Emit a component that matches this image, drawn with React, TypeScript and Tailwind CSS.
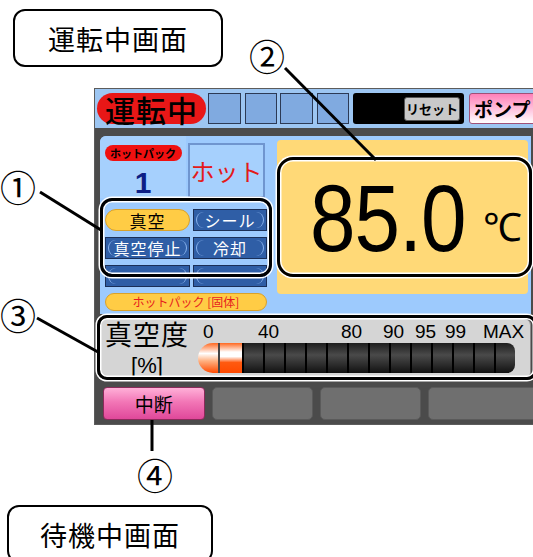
import React from "react";

const jp = "font-['Noto_Sans_CJK_JP',sans-serif]";

function BlueKey({ label }: { label?: string }) {
  return (
    <div className="relative flex items-center justify-center bg-[#2f5ea6] border border-[#1b2f57] text-white text-[16px] leading-none">
      <div className="absolute inset-[2px] rounded-[8px] border-x-[1.5px] border-[#8ab4ee]" />
      {label && <span className="relative tracking-[1px]">{label}</span>}
    </div>
  );
}

function Callout({ className }: { className: string }) {
  return (
    <div
      className={`absolute border-[3px] border-black shadow-[0_0_0_1.5px_#fff,inset_0_0_0_1.5px_#fff] ${className}`}
    />
  );
}

export default function App() {
  const ticks = [
    { t: "0", x: 10 },
    { t: "40", x: 65 },
    { t: "80", x: 148 },
    { t: "90", x: 190 },
    { t: "95", x: 222 },
    { t: "99", x: 252 },
    { t: "MAX", x: 290 },
  ];

  return (
    <div className={`relative w-[533px] h-[557px] bg-white overflow-hidden ${jp} text-black`}>
      {/* 運転中画面 label */}
      <div className="ml-[13px] mt-[9px] w-[210px] h-[58px] border-2 border-black rounded-[12px] flex items-center justify-center text-[27px] leading-none tracking-[1px]">
        運転中画面
      </div>

      {/* device screen */}
      <div className="ml-[94px] mt-[21px] w-[445px] h-[337px] bg-[#4b4b4b] border border-[#5c5c5c] flex flex-col">
        {/* status bar */}
        <div className="h-[39px] bg-[#9dc6f2] flex items-center pl-[2px] shrink-0">
          <div className="w-[111px] h-[31px] rounded-full bg-[#e81717] flex items-center justify-center text-[30px] leading-none font-medium tracking-[1px]">
            運転中
          </div>
          <div className="ml-[2px] w-[33px] h-[31px] bg-[#80aae0] border border-[#2c3a55]" />
          <div className="ml-[4px] w-[33px] h-[31px] bg-[#80aae0] border border-[#2c3a55]" />
          <div className="ml-[3px] w-[33px] h-[31px] bg-[#80aae0] border border-[#2c3a55]" />
          <div className="ml-[4px] w-[33px] h-[31px] bg-[#80aae0] border border-[#2c3a55]" />
          <div className="ml-[4px] w-[113px] h-[31px] bg-black rounded-[3px] flex items-center justify-end pr-[4px]">
            <div className="w-[56px] h-[24px] bg-[#c9c9c9] border border-[#555] rounded-[3px] flex items-center justify-center text-[13px] font-bold leading-none">
              リセット
            </div>
          </div>
          <div className="ml-[5px] w-[70px] h-[31px] rounded-[3px] border border-[#a05078] bg-[linear-gradient(to_bottom,#ff80b8,#ffd8ea_70%,#fff)] flex items-center pl-[4px] text-[19px] font-bold leading-none">
            ポンプ
          </div>
        </div>

        {/* body */}
        <div className="flex flex-col pl-[5px] pt-[8px]">
          <div className="w-[431px] h-[178px] bg-[#9dcafd] rounded-tl-[6px] flex">
            {/* left column */}
            <div className="w-[172px] flex flex-col">
              <div className="flex h-[62px]">
                <div className="w-[86px] flex flex-col items-center pt-[9px] bg-[#a6d0fd] rounded-tl-[6px]">
                  <div className="w-[77px] h-[18px] rounded-[8px] bg-[#f01010] flex items-center justify-center text-[11px] font-bold leading-none">
                    ホットパック
                  </div>
                  <div className="mt-[7px] text-[30px] font-bold leading-none text-[#0c1e85] font-['Liberation_Sans',sans-serif]">
                    1
                  </div>
                </div>
                <div className="ml-[2px] mt-[7px] w-[77px] h-[55px] border-2 border-[#6f95cf] bg-[#a6d0fd] flex items-center justify-center text-[24px] text-[#e31a1a] leading-none">
                  ホット
                </div>
              </div>
              <div className="mt-[11px] ml-[5px] grid grid-cols-[85px_74px] gap-x-[3px] gap-y-[6px] auto-rows-[22px]">
                <div className="rounded-full bg-[#ffcc45] border border-[#d9a12a] flex items-center justify-center text-[17px] leading-none tracking-[1px]">
                  真空
                </div>
                <BlueKey label="シール" />
                <BlueKey label="真空停止" />
                <BlueKey label="冷却" />
                <BlueKey />
                <BlueKey />
              </div>
              <div className="mt-[6px] ml-[5px] w-[162px] h-[18px] rounded-full bg-[#ffcc45] border border-[#d9a12a] flex items-center justify-center text-[12px] text-[#e61e1e] leading-none">
                ホットパック [固体]
              </div>
            </div>

            {/* temperature */}
            <div className="ml-[5px] mt-[4px] w-[251px] h-[154px] bg-[#ffd977] rounded-[4px] flex items-center pl-[33px] pt-[4px]">
              <span className="inline-block origin-left scale-x-[0.87] text-[94px] leading-none tracking-[-1px] font-['Liberation_Sans',sans-serif]">
                85.0
              </span>
              <span className="-ml-[6px] mt-[16px] text-[39px] leading-none font-['Liberation_Sans',sans-serif]">
                ℃
              </span>
            </div>
          </div>

          {/* vacuum gauge */}
          <div className="mt-[4px] w-[431px] h-[62px] bg-[#d5d5d5] rounded-[7px] border border-[#8a8a8a] flex">
            <div className="w-[92px] flex flex-col items-center pt-[2px]">
              <div className="h-[26px] text-[27px] leading-[26px] tracking-[1px]">真空度</div>
              <div className="mt-[9px] h-[20px] text-[22px] leading-[20px] font-['Liberation_Sans',sans-serif]">[%]</div>
            </div>
            <div className="flex flex-col pt-[3px]">
              <div className="relative h-[21px] w-[330px] text-[19px] leading-none font-['Liberation_Sans',sans-serif]">
                {ticks.map((k) => (
                  <span key={k.t} className="absolute top-0" style={{ left: k.x }}>
                    {k.t}
                  </span>
                ))}
              </div>
              <div className="ml-[5px] flex h-[30px] w-[317px]">
                <div className="w-[22px] rounded-l-full bg-[linear-gradient(to_bottom,#ff6820,#fff_35%,#ffb080_60%,#ff4a00)] border-r-2 border-[#444]" />
                <div className="w-[22px] bg-[linear-gradient(to_bottom,#ff6820,#fff_30%,#fff_45%,#ff5a10_65%,#ff4a00)]" />
                {Array.from({ length: 13 }).map((_, i) => (
                  <div
                    key={i}
                    className={`w-[21px] border-l-2 border-black bg-[linear-gradient(to_bottom,#1e1e1e,#4a4a4a_40%,#2a2a2a_75%,#111)] ${i === 12 ? "rounded-r-[8px]" : ""}`}
                  />
                ))}
              </div>
            </div>
          </div>

          {/* function keys */}
          <div className="mt-[7px] ml-[3px] flex gap-[7px] h-[33px]">
            <div className="w-[102px] rounded-[4px] border border-[#8a2a5a] bg-[linear-gradient(to_bottom,#ffb0d8,#f276b6_45%,#e0489a)] flex items-center justify-center text-[19px] leading-none">
              中断
            </div>
            <div className="w-[101px] rounded-[5px] bg-[#6f6f6f] border border-[#5a5a5a]" />
            <div className="w-[102px] rounded-[5px] bg-[#6f6f6f] border border-[#5a5a5a]" />
            <div className="w-[110px] rounded-[5px] bg-[#6f6f6f] border border-[#5a5a5a]" />
          </div>
        </div>
      </div>

      {/* 待機中画面 label */}
      <div className="ml-[7px] mt-[80px] w-[206px] h-[58px] border-2 border-black rounded-[12px] flex items-start justify-center pt-[14px] text-[27px] leading-none tracking-[1px]">
        待機中画面
      </div>

      {/* annotation overlays */}
      <Callout className="left-[100px] top-[198px] w-[172px] h-[79px] rounded-[12px]" />
      <Callout className="left-[277px] top-[157px] w-[255px] h-[120px] rounded-[16px]" />
      <Callout className="left-[97px] top-[315px] w-[440px] h-[65px] rounded-[10px]" />

      <svg className="absolute inset-0 pointer-events-none" width="533" height="557">
        <g stroke="#000" strokeWidth="3">
          <line x1="40" y1="192" x2="101" y2="230" />
          <line x1="285" y1="68" x2="376" y2="160" />
          <line x1="37" y1="318" x2="98" y2="352" />
          <line x1="152" y1="420" x2="152" y2="451" />
        </g>
      </svg>

      <span className="absolute left-0 top-[168px] text-[36px] leading-none">①</span>
      <span className="absolute left-[249px] top-[37px] text-[36px] leading-none">②</span>
      <span className="absolute left-0 top-[296px] text-[36px] leading-none">③</span>
      <span className="absolute left-[137px] top-[456px] text-[36px] leading-none">④</span>
    </div>
  );
}
